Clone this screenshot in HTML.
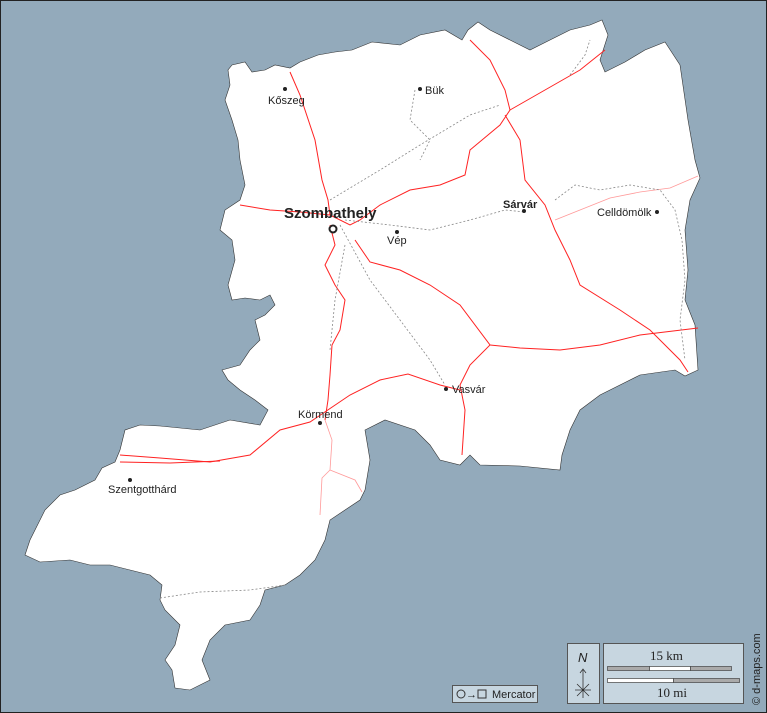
<!DOCTYPE html>
<html><head><meta charset="utf-8"><style>
html,body{margin:0;padding:0;background:#93aabb;}
svg{display:block;}
text{font-family:"Liberation Sans",sans-serif;fill:#222;}
</style></head><body>
<svg width="767" height="713" viewBox="0 0 767 713" xmlns="http://www.w3.org/2000/svg">
<rect x="0.5" y="0.5" width="766" height="712" fill="#93aabb" stroke="#222" stroke-width="1"/>
<polygon fill="#fff" stroke="#333" stroke-width="0.6" points="230,85 228,70 232,65 245,62 252,72 265,70 275,65 290,68 300,62 318,55 335,52 352,50 372,42 400,45 420,35 445,30 462,40 468,30 478,22 490,30 510,40 530,50 550,40 570,30 590,25 602,20 608,35 600,60 605,72 625,62 645,50 665,42 680,65 688,120 695,160 700,178 690,200 685,230 688,270 685,300 695,325 698,370 685,376 675,370 640,375 600,395 580,410 570,430 562,455 560,470 520,466 480,465 470,455 460,465 440,460 430,445 415,430 385,420 365,430 370,460 365,490 360,500 345,510 330,520 325,540 315,560 300,575 285,585 265,590 260,605 250,620 225,625 210,640 202,660 210,680 190,690 175,688 172,670 165,660 175,645 180,625 165,610 160,600 162,585 150,575 130,570 110,565 90,565 70,560 40,562 25,555 30,540 45,510 60,495 75,490 95,480 102,468 115,462 120,450 125,430 140,425 160,426 200,430 230,420 260,425 268,410 255,400 240,390 228,380 222,370 240,365 250,350 260,340 255,320 265,315 275,305 270,295 260,300 245,298 232,300 228,285 235,260 232,240 220,230 225,210 240,200 245,185 240,160 238,140 232,120 225,100"/>
<g fill="none" stroke="#f22" stroke-width="1">
<path d="M290,72 L300,95 L315,140 L322,180 L328,200 L330,215 L350,225 L360,220 L380,205 L410,190 L440,185 L465,175 L470,150 L500,125 L510,110 L505,90 L490,60 L470,40"/>
<path d="M505,115 L520,140 L525,180 L545,205 L555,230 L570,260 L580,285 L620,310 L650,330 L680,360 L688,372"/>
<path d="M510,110 L545,90 L580,70 L605,50"/>
<path d="M240,205 L270,210 L300,212 L330,215"/>
<path d="M330,225 L335,245 L325,265 L335,285 L345,300 L340,330 L332,345 L330,375 L328,400 L325,420"/>
<path d="M355,240 L370,262 L400,270 L430,285 L460,305 L490,345 L470,365 L460,385 L465,410 L462,455"/>
<path d="M490,345 L520,348 L560,350 L600,345 L640,335 L698,328"/>
<path d="M120,455 L160,458 L210,462 L250,455 L280,430 L310,422 L350,395 L380,380 L408,374 L440,385 L460,390"/>
<path d="M120,462 L170,463 L220,461"/>
</g>
<g fill="none" stroke="#f99" stroke-width="0.8">
<path d="M555,220 L580,210 L610,198 L640,192 L670,188 L698,176"/>
<path d="M325,420 L332,440 L330,470 L322,478 L320,515 M330,470 L355,480 L362,492"/>
</g>
<g fill="none" stroke="#888" stroke-width="0.8" stroke-dasharray="2,2">
<path d="M330,200 L380,170 L420,145 L470,115 L500,105"/>
<path d="M345,220 L390,225 L430,230 L470,220 L505,210 L525,212"/>
<path d="M340,225 L370,280 L400,320 L430,360 L445,385"/>
<path d="M345,245 L335,300 L330,350"/>
<path d="M415,90 L410,120 L430,140 L420,160"/>
<path d="M555,200 L575,185 L600,190 L630,185 L660,190 L675,210 L682,240 L685,280 L680,320 L685,360"/>
<path d="M160,598 L200,592 L250,590 L285,585"/>
<path d="M570,75 L585,55 L590,40"/>
</g>
<g fill="#222">
<circle cx="285" cy="89" r="2"/><circle cx="420" cy="89" r="2"/><circle cx="524" cy="211" r="2"/>
<circle cx="657" cy="212" r="2"/><circle cx="397" cy="232" r="2"/><circle cx="446" cy="389" r="2"/>
<circle cx="320" cy="423" r="2"/><circle cx="130" cy="480" r="2"/>
</g>
<circle cx="333" cy="229" r="3.5" fill="#fff" stroke="#222" stroke-width="2"/>
<g font-size="11">
<text x="268" y="104">Kőszeg</text>
<text x="425" y="94">Bük</text>
<text x="503" y="208" font-weight="bold">Sárvár</text>
<text x="597" y="216">Celldömölk</text>
<text x="387" y="244">Vép</text>
<text x="452" y="393">Vasvár</text>
<text x="298" y="418">Körmend</text>
<text x="108" y="493">Szentgotthárd</text>
</g>
<text x="284" y="218" font-size="15" font-weight="bold">Szombathely</text>
<rect x="452.5" y="685.5" width="85" height="17" fill="#c7d6e0" stroke="#555"/>
<circle cx="461" cy="694" r="4" fill="none" stroke="#333"/>
<text x="466" y="698" font-size="11">→</text>
<rect x="478" y="690" width="8" height="8" fill="none" stroke="#333"/>
<text x="492" y="698" font-size="11">Mercator</text>
<rect x="567.5" y="643.5" width="32" height="60" fill="#c7d6e0" stroke="#555"/>
<text x="578" y="662" font-size="13" font-style="italic" font-family="Liberation Serif">N</text>
<path d="M583,670 L583,698 M575,690 L591,690 M577,684 L589,696 M589,684 L577,696 M580,673 L583,669 L586,673" stroke="#333" fill="none" stroke-width="0.8"/>
<rect x="603.5" y="643.5" width="140" height="60" fill="#c7d6e0" stroke="#555"/>
<text x="650" y="660" font-size="13" font-family="Liberation Serif" style="font-family:'Liberation Serif',serif">15 km</text>
<rect x="607.5" y="666.5" width="42" height="4" fill="#aaa" stroke="#444" stroke-width="0.7"/>
<rect x="649.5" y="666.5" width="41" height="4" fill="#fff" stroke="#444" stroke-width="0.7"/>
<rect x="690.5" y="666.5" width="41" height="4" fill="#aaa" stroke="#444" stroke-width="0.7"/>
<rect x="607.5" y="678.5" width="66" height="4" fill="#fff" stroke="#444" stroke-width="0.7"/>
<rect x="673.5" y="678.5" width="66" height="4" fill="#aaa" stroke="#444" stroke-width="0.7"/>
<text x="657" y="697" font-size="13" style="font-family:'Liberation Serif',serif">10 mi</text>
<text transform="translate(760,705) rotate(-90)" font-size="11">© d-maps.com</text>
</svg>
</body></html>
